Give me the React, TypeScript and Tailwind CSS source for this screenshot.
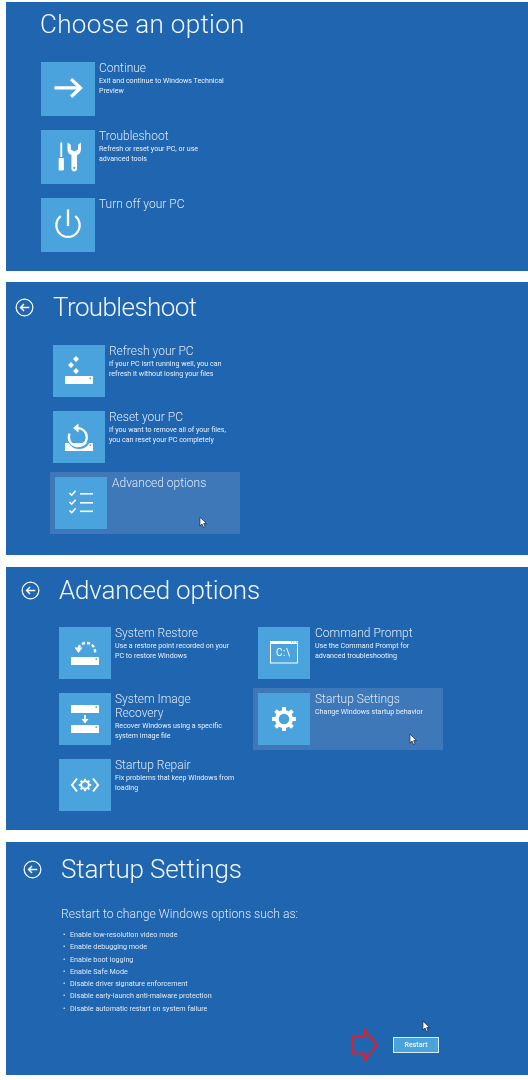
import type { ReactNode } from "react";

const svgProps = { viewBox: "0 0 52 52", className: "w-full h-full", fill: "none" };

const Drive = ({ y }: { y: number }) => (
  <g>
    <rect x="12" y={y} width="28" height="8" rx="0.5" fill="#fff" />
    <rect x="36.5" y={y + 1.5} width="1.5" height="1.5" fill="#4aa3dc" />
  </g>
);

const ArrowIcon = () => (
  <svg {...svgProps}>
    <path d="M13 25h25M29 16.500l9 8.500-9 8.500" stroke="#fff" strokeWidth="3.200" />
  </svg>
);

const ToolsIcon = () => (
  <svg {...svgProps}>
    <path d="M18.600 12h1.800v14h-1.800z" fill="#fff" />
    <rect x="17" y="27" width="5" height="12" rx="0.8" fill="#fff" />
    <path
      d="M25.500 12v6.500c0 3 1.500 4.800 3.800 5.600V37a2.700 2.700 0 0 0 5.400 0V24.100c2.300-.8 3.800-2.600 3.800-5.600V12l-2.800 2.200v4.600l-3.500 1.800-3.500-1.800v-4.600z"
      fill="#fff"
    />
    <circle cx="32" cy="36.500" r="1" fill="#4aa3dc" />
  </svg>
);

const PowerIcon = () => (
  <svg {...svgProps}>
    <path d="M19 17.500a11.200 11.200 0 1 0 14 0" stroke="#fff" strokeWidth="2.200" />
    <path d="M26 11v16" stroke="#fff" strokeWidth="2.200" />
  </svg>
);

const RefreshIcon = () => (
  <svg {...svgProps}>
    <path d="M23 11l3 3-3 3-3-3zM18 17l3 3-3 3-3-3zM23 23l3 3-3 3-3-3z" fill="#fff" />
    <Drive y={31} />
  </svg>
);

const ResetIcon = () => (
  <svg {...svgProps}>
    <Drive y={32} />
    <circle cx="26" cy="26" r="11" stroke="#4aa3dc" strokeWidth="2" />
    <path d="M24 17.200a9 9 0 1 1-7.500 5.500" stroke="#fff" strokeWidth="2.200" />
    <path d="M25.500 12.500v9l-5.500-4.500z" fill="#fff" />
  </svg>
);

const ChecklistIcon = () => (
  <svg {...svgProps}>
    {[16, 25, 33.5].map((y) => (
      <g key={y} stroke="#fff">
        <path d={`M14.500 ${y}l2.200 2.200 4-4.400`} strokeWidth="1.600" />
        <path d={`M25 ${y + 0.8}h13`} strokeWidth="1.600" />
      </g>
    ))}
  </svg>
);

const RestoreIcon = () => (
  <svg {...svgProps}>
    <path d="M19.500 21a8.700 8.700 0 0 1 16.500 5" stroke="#fff" strokeWidth="2.400" strokeDasharray="3.200 2" />
    <path d="M15.500 20.500h8l-4 5.500z" fill="#fff" />
    <Drive y={30} />
  </svg>
);

const ImageIcon = () => (
  <svg {...svgProps}>
    <Drive y={12} />
    <path d="M26 22v6" stroke="#fff" strokeWidth="1.800" />
    <path d="M22.500 26h7L26 30.500z" fill="#fff" />
    <Drive y={32} />
  </svg>
);

const Gear = ({ r, tooth, width }: { r: number; tooth: number; width: number }) => (
  <g>
    <circle cx="26" cy="26" r={r} stroke="#fff" strokeWidth={width} />
    {[0, 45, 90, 135, 180, 225, 270, 315].map((a) => (
      <rect
        key={a}
        x={26 - tooth / 2}
        y={26 - r - width / 2 - tooth * 0.7}
        width={tooth}
        height={tooth}
        fill="#fff"
        transform={`rotate(${a} 26 26)`}
      />
    ))}
  </g>
);

const RepairIcon = () => (
  <svg {...svgProps}>
    <path d="M18 19.500l-5 6.500 5 6.500M34 19.500l5 6.500-5 6.500" stroke="#fff" strokeWidth="2" />
    <Gear r={3.800} tooth={2} width={2} />
  </svg>
);

const GearIcon = () => (
  <svg {...svgProps}>
    <Gear r={7.200} tooth={4} width={3.800} />
  </svg>
);

const CmdIcon = () => (
  <div className="relative w-full h-full">
    <svg {...svgProps}>
      <rect x="12.500" y="14.500" width="27" height="21.500" stroke="#fff" />
      <rect x="12" y="14" width="28" height="3" fill="#fff" />
      <path d="M33 15h1M35.500 15h1M38 15h1" stroke="#4aa3dc" />
    </svg>
    <span className="absolute left-[18px] top-[20px] text-[10px] leading-[12px] tracking-[0.5px] text-white">
      C:\
    </span>
  </div>
);

const BackIcon = () => (
  <svg viewBox="0 0 20 20" className="w-[19px] h-[19px] shrink-0" fill="none">
    <circle cx="10" cy="10" r="8.800" stroke="#fff" strokeWidth="1.300" />
    <path d="M15 10H6M9.500 6.300L5.800 10l3.700 3.700" stroke="#fff" strokeWidth="1.500" />
  </svg>
);

const Cursor = ({ className }: { className: string }) => (
  <svg viewBox="0 0 10 14" className={`absolute w-[9px] h-[13px] ${className}`}>
    <path d="M1 1v10l2.400-2.200L5 12.500l1.800-.8-1.600-3.500H8.400z" fill="#fff" stroke="#1c2c44" strokeWidth="0.900" />
  </svg>
);

type OptionProps = {
  icon: ReactNode;
  title: ReactNode;
  desc?: ReactNode;
  size?: "lg" | "md";
  hot?: boolean;
  wide?: boolean;
};

const Option = ({ icon, title, desc, size = "md", hot, wide }: OptionProps) => (
  <div
    className={
      hot
        ? "flex gap-[5px] bg-[#3f78b9] p-[5px] -ml-[5px] -mt-[5px] -mb-[5px] relative w-[190px]"
        : `flex ${wide ? "gap-[5px]" : "gap-[4px]"} w-[190px]`
    }
  >
    <div className={`${size === "lg" ? "w-[54px] h-[54px]" : "w-[52px] h-[52px]"} bg-[#4aa3dc] shrink-0`}>{icon}</div>
    <div className="text-[#dfeaf6] -mt-[1px]">
      <h3 className="text-[12px] leading-[14px] font-light whitespace-nowrap">{title}</h3>
      {desc && <p className="text-[7.100px] leading-[10px] mt-[1px] text-[#e8f1fa] whitespace-nowrap">{desc}</p>}
    </div>
  </div>
);

const Heading = ({ children, back }: { children: ReactNode; back?: boolean }) => (
  <div className="flex items-center">
    {back && <BackIcon />}
    <h1 className="text-[26px] leading-[36px] font-light text-[#f2f7fc] whitespace-nowrap">{children}</h1>
  </div>
);

const restartOptions = [
  "Enable low-resolution video mode",
  "Enable debugging mode",
  "Enable boot logging",
  "Enable Safe Mode",
  "Disable driver signature enforcement",
  "Disable early-launch anti-malware protection",
  "Disable automatic restart on system failure",
];

export default function App() {
  return (
    <div className="w-[528px] h-[1080px] bg-white pl-[6px] pt-[2px] overflow-hidden relative font-['Roboto',sans-serif] blur-[0.35px]">
      {/* Choose an option */}
      <section className="h-[269px] bg-[#1f65b0] pl-[34px] pt-[4px]">
        <Heading>
          <span className="tracking-[0.3px]">Choose an option</span>
        </Heading>
        <div className="flex flex-col gap-[14px] mt-[20px] ml-[1px]">
          <Option size="lg" icon={<ArrowIcon />} title="Continue" desc={<>Exit and continue to Windows Technical<br />Preview</>} />
          <Option size="lg" icon={<ToolsIcon />} title="Troubleshoot" desc={<>Refresh or reset your PC, or use<br />advanced tools</>} />
          <Option size="lg" icon={<PowerIcon />} title="Turn off your PC" />
        </div>
      </section>

      {/* Troubleshoot */}
      <section className="h-[273px] mt-[11px] bg-[#1f65b0] pl-[9px] pt-[7px] relative">
        <Heading back>
          <span className="ml-[19px] tracking-[-0.6px]">Troubleshoot</span>
        </Heading>
        <div className="flex flex-col gap-[14px] mt-[20px] ml-[38px]">
          <Option icon={<RefreshIcon />} title="Refresh your PC" desc={<>If your PC isn&apos;t running well, you can<br />refresh it without losing your files</>} />
          <Option icon={<ResetIcon />} title="Reset your PC" desc={<>If you want to remove all of your files,<br />you can reset your PC completely</>} />
          <div className="ml-[2px]">
            <Option hot icon={<ChecklistIcon />} title="Advanced options" />
          </div>
        </div>
        <Cursor className="left-[193px] top-[234px]" />
      </section>

      {/* Advanced options */}
      <section className="h-[263px] mt-[12px] bg-[#1f65b0] pl-[15px] pt-[5px] relative">
        <Heading back>
          <span className="ml-[19px] tracking-[-0.2px]">Advanced options</span>
        </Heading>
        <div className="grid grid-cols-[199px_190px] gap-y-[14px] mt-[19px] ml-[38px]">
          <Option icon={<RestoreIcon />} title="System Restore" desc={<>Use a restore point recorded on your<br />PC to restore Windows</>} />
          <Option wide icon={<CmdIcon />} title="Command Prompt" desc={<>Use the Command Prompt for<br />advanced troubleshooting</>} />
          <Option icon={<ImageIcon />} title={<>System Image<br />Recovery</>} desc={<>Recover Windows using a specific<br />system image file</>} />
          <Option hot icon={<GearIcon />} title="Startup Settings" desc="Change Windows startup behavior" />
          <Option icon={<RepairIcon />} title="Startup Repair" desc={<>Fix problems that keep Windows from<br />loading</>} />
        </div>
        <Cursor className="left-[403px] top-[166px]" />
      </section>

      {/* Startup Settings */}
      <section className="h-[233px] mt-[12px] bg-[#1f65b0] pl-[17px] pt-[9px] relative">
        <Heading back>
          <span className="ml-[19px] tracking-[-0.2px]">Startup Settings</span>
        </Heading>
        <div className="ml-[38px] mt-[18px] text-[#dfeaf6]">
          <p className="text-[12.200px] leading-[18px] font-light">Restart to change Windows options such as:</p>
          <ul className="mt-[6px]">
            {restartOptions.map((item) => (
              <li key={item} className="text-[7.200px] leading-[12.250px] flex">
                <span className="w-[9px] pl-[2px]">•</span>
                {item}
              </li>
            ))}
          </ul>
        </div>
        <button className="absolute left-[387px] top-[195px] w-[46px] h-[16px] bg-[#4aa3dc] border border-[#d9ecfa] text-[7px] font-semibold text-[#e8f3fc] leading-none">
          Restart
        </button>
        <Cursor className="left-[416px] top-[178px]" />
        <svg viewBox="0 0 28 34" className="absolute left-[345px] top-[186px] w-[28px] h-[34px]" fill="none">
          <path d="M1.500 8.500h12V2L26 17 13.500 32v-6.500h-12z" stroke="#e01f2d" strokeWidth="2" />
        </svg>
      </section>
    </div>
  );
}
